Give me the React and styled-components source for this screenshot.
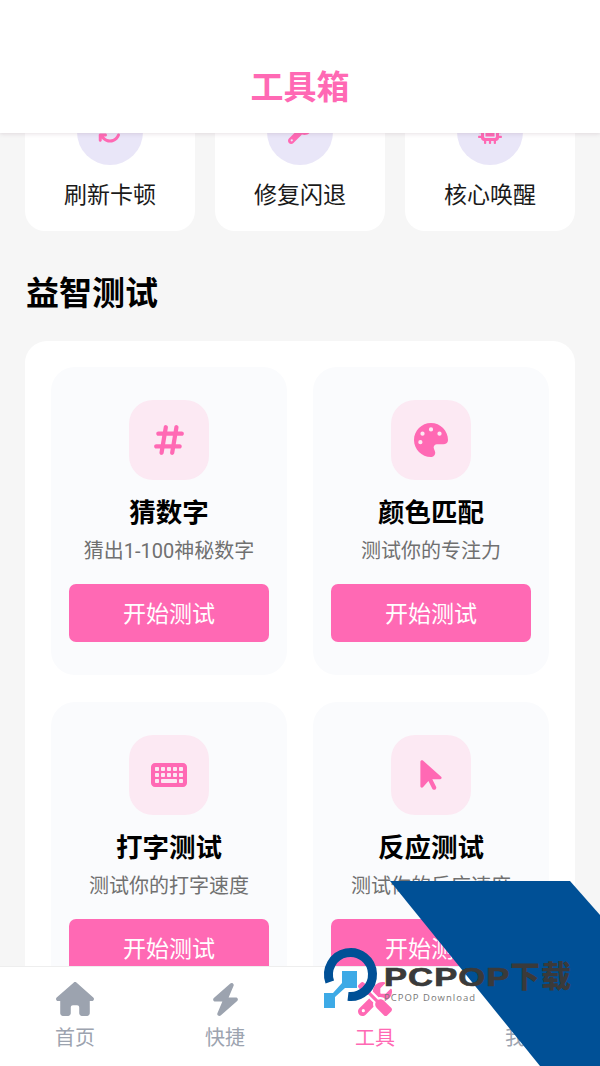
import React from "react";
import styled, { createGlobalStyle } from "styled-components";
import {
  FaHashtag, FaPalette, FaKeyboard, FaArrowPointer, FaHouse, FaBolt, FaScrewdriverWrench, FaUser,
  FaArrowsRotate, FaWrench, FaMicrochip,
} from "react-icons/fa6";

const Global = createGlobalStyle`
  html, body { margin: 0; padding: 0; background: #f6f6f6; }
  * { box-sizing: border-box; }
  body { font-family: Roboto, "Noto Sans CJK SC", sans-serif; }
`;

const PINK = "#ff69b4";

const Screen = styled.div`
  position: relative;
  width: 600px;
  height: 1066px;
  overflow: hidden;
  background: #f6f6f6;
`;
const Header = styled.header`
  position: absolute;
  top: 0; left: 0; right: 0;
  height: 133px;
  z-index: 2;
  background: #fff;
  box-shadow: 0 1px 4px rgba(120, 90, 110, 0.18);
  display: flex;
  align-items: flex-end;
  justify-content: center;
  padding-bottom: 22px;
`;
const HeaderTitle = styled.h1`
  margin: 0;
  font-size: 33px;
  line-height: 46px;
  font-weight: 700;
  color: ${PINK};
`;
const Main = styled.main`
  padding: 73px 25px 0;
`;
const ToolRow = styled.div`
  display: grid;
  grid-template-columns: repeat(3, 170px);
  gap: 20px;
`;
const ToolCard = styled.div`
  height: 158px;
  padding-top: 26px;
  background: #fff;
  border-radius: 20px;
  display: flex;
  flex-direction: column;
  align-items: center;
`;
const ToolIcon = styled.div`
  width: 66px;
  height: 66px;
  border-radius: 50%;
  background: #e9e6f8;
  color: ${PINK};
  font-size: 24px;
  display: flex;
  align-items: center;
  justify-content: center;
`;
const ToolLabel = styled.div`
  margin-top: 14px;
  font-size: 23px;
  line-height: 34px;
  color: #1a1a1a;
`;
const SectionTitle = styled.h2`
  margin: 43px 0 0 1px;
  font-size: 33px;
  line-height: 40px;
  font-weight: 700;
  color: #000;
`;
const Panel = styled.section`
  margin-top: 27px;
  padding: 26px;
  background: #fff;
  border-radius: 22px;
  display: grid;
  grid-template-columns: repeat(2, 236px);
  gap: 27px 26px;
`;
const GameCard = styled.article`
  height: 308px;
  padding: 33px 18px 0;
  background: #fafbfd;
  border-radius: 24px;
  display: flex;
  flex-direction: column;
  align-items: center;
`;
const GameIcon = styled.div`
  width: 80px;
  height: 80px;
  border-radius: 24px;
  background: #fce9f3;
  color: ${PINK};
  font-size: ${(p) => p.$size || 32}px;
  display: flex;
  align-items: center;
  justify-content: center;
`;
const GameTitle = styled.h3`
  margin: 14px 0 0;
  font-size: 26.5px;
  line-height: 38px;
  font-weight: 700;
  color: #000;
`;
const GameDesc = styled.p`
  margin: 4px 0 0;
  font-size: 20px;
  line-height: 30px;
  color: #707070;
`;
const StartButton = styled.button`
  margin-top: 18px;
  width: 200px;
  height: 58px;
  padding: 0 0 3px;
  border: 0;
  border-radius: 7px;
  background: ${PINK};
  color: #fff;
  font: inherit;
  font-size: 23px;
`;
const TabBar = styled.nav`
  position: absolute;
  left: 0; right: 0; bottom: 0;
  height: 100px;
  z-index: 2;
  background: #fff;
  border-top: 1px solid #eeeeee;
  display: grid;
  grid-template-columns: repeat(4, 150px);
`;
const Tab = styled.div`
  display: flex;
  flex-direction: column;
  align-items: center;
  padding-top: 14px;
  color: ${(p) => (p.$active ? PINK : "#9ca3af")};
`;
const TabIcon = styled.div`
  height: 36px;
  font-size: ${(p) => p.$size || 34}px;
  display: flex;
  align-items: center;
  justify-content: center;
`;
const TabLabel = styled.div`
  margin-top: 6px;
  font-size: 20px;
  line-height: 30px;
`;
const Watermark = styled.div`
  position: absolute;
  left: 320px;
  top: 881px;
  width: 280px;
  height: 185px;
  z-index: 3;
`;
const WatermarkArt = styled.svg`
  display: block;
`;
const BrandName = styled.div`
  position: absolute;
  left: 64px;
  top: 80px;
  font-family: "Liberation Sans", "Noto Sans CJK SC", sans-serif;
  line-height: 32px;
  font-weight: 700;
  color: #3a3a3a;
  white-space: nowrap;
  display: flex;
  align-items: center;
`;
const BrandLatin = styled.span`
  display: inline-block;
  width: 126px;
  font-size: 25px;
  letter-spacing: 0.8px;
  transform: scaleX(1.38);
  transform-origin: left center;
  -webkit-text-stroke: 0.7px #3a3a3a;
`;
const BrandCjk = styled.span`
  font-size: 30px;
  font-weight: 900;
  letter-spacing: 1px;
`;
const BrandSub = styled.div`
  position: absolute;
  left: 64px;
  top: 110px;
  font-family: "Open Sans", sans-serif;
  font-size: 9.5px;
  line-height: 14px;
  letter-spacing: 1px;
  color: #777;
  white-space: nowrap;
`;

const tools = [
  { label: "刷新卡顿", icon: <FaArrowsRotate /> },
  { label: "修复闪退", icon: <FaWrench /> },
  { label: "核心唤醒", icon: <FaMicrochip /> },
];
const games = [
  { title: "猜数字", desc: "猜出1-100神秘数字", icon: <FaHashtag />, size: 34 },
  { title: "颜色匹配", desc: "测试你的专注力", icon: <FaPalette />, size: 34 },
  { title: "打字测试", desc: "测试你的打字速度", icon: <FaKeyboard />, size: 36 },
  { title: "反应测试", desc: "测试你的反应速度", icon: <FaArrowPointer />, size: 34 },
];
const tabs = [
  { label: "首页", icon: <FaHouse />, size: 38 },
  { label: "快捷", icon: <FaBolt />, size: 33 },
  { label: "工具", icon: <FaScrewdriverWrench />, size: 34, active: true },
  { label: "我的", icon: <FaUser />, size: 30 },
];

export default function App() {
  return (
    <Screen>
      <Global />
      <Header><HeaderTitle>工具箱</HeaderTitle></Header>
      <Main>
        <ToolRow>
          {tools.map((t) => (
            <ToolCard key={t.label}>
              <ToolIcon>{t.icon}</ToolIcon>
              <ToolLabel>{t.label}</ToolLabel>
            </ToolCard>
          ))}
        </ToolRow>
        <SectionTitle>益智测试</SectionTitle>
        <Panel>
          {games.map((g) => (
            <GameCard key={g.title}>
              <GameIcon $size={g.size}>{g.icon}</GameIcon>
              <GameTitle>{g.title}</GameTitle>
              <GameDesc>{g.desc}</GameDesc>
              <StartButton>开始测试</StartButton>
            </GameCard>
          ))}
        </Panel>
      </Main>
      <TabBar>
        {tabs.map((t) => (
          <Tab key={t.label} $active={t.active}>
            <TabIcon $size={t.size}>{t.icon}</TabIcon>
            <TabLabel>{t.label}</TabLabel>
          </Tab>
        ))}
      </TabBar>
      <Watermark>
        <WatermarkArt width="280" height="185" viewBox="0 0 280 185">
          <polygon points="70,0 250,0 280,34 280,185 220,185" fill="#005096" />
          <path d="M9.8 101 A22 22 0 1 1 28 115.4" fill="none" stroke="#005096" strokeWidth="9" />
          <polygon points="22,90 37,90 37,107 25,107 15,116 15,127 4,127 4,112 13,112 22,102" fill="#3daae6" />
        </WatermarkArt>
        <BrandName><BrandLatin>PCPOP</BrandLatin><BrandCjk>下载</BrandCjk></BrandName>
        <BrandSub>PCPOP Download</BrandSub>
      </Watermark>
    </Screen>
  );
}
